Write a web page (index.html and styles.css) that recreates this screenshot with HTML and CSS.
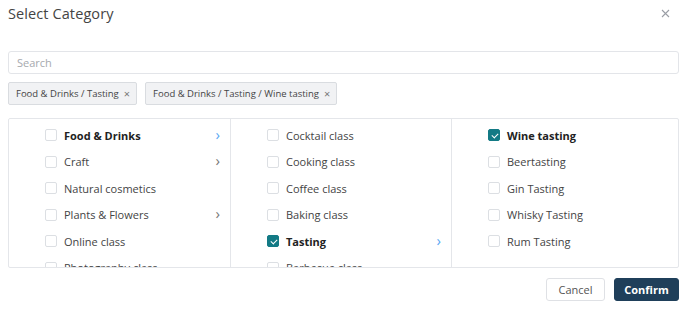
FILE: index.html
```html
<!DOCTYPE html>
<html lang="en">

<head>
    <meta charset="UTF-8">
    <meta name="viewport" content="width=device-width, initial-scale=1.0">
    <title>Select Category</title>
    <link rel="stylesheet" href="styles.css">
</head>

<body>
    <div class="modal">
        <div class="modal-header">
            <h2>Select Category</h2>
            <button class="close-btn" aria-label="Close">
                <svg width="9" height="9" viewBox="0 0 9 9"><path d="M1 1L8 8M8 1L1 8" stroke="#9a9ea5" stroke-width="1.1" fill="none"/></svg>
            </button>
        </div>

        <input type="text" class="search" placeholder="Search">

        <div class="tags">
            <span class="tag">Food &amp; Drinks / Tasting <span class="tag-x">&times;</span></span>
            <span class="tag">Food &amp; Drinks / Tasting / Wine tasting <span class="tag-x">&times;</span></span>
        </div>

        <div class="panel">
            <ul class="column">
                <li class="item active"><span class="box"></span><span class="label">Food &amp; Drinks</span><span class="chev blue">&rsaquo;</span></li>
                <li class="item"><span class="box"></span><span class="label">Craft</span><span class="chev">&rsaquo;</span></li>
                <li class="item"><span class="box"></span><span class="label">Natural cosmetics</span></li>
                <li class="item"><span class="box"></span><span class="label">Plants &amp; Flowers</span><span class="chev">&rsaquo;</span></li>
                <li class="item"><span class="box"></span><span class="label">Online class</span></li>
                <li class="item"><span class="box"></span><span class="label">Photography class</span></li>
            </ul>
            <ul class="column">
                <li class="item"><span class="box"></span><span class="label">Cocktail class</span></li>
                <li class="item"><span class="box"></span><span class="label">Cooking class</span></li>
                <li class="item"><span class="box"></span><span class="label">Coffee class</span></li>
                <li class="item"><span class="box"></span><span class="label">Baking class</span></li>
                <li class="item active"><span class="box checked"></span><span class="label">Tasting</span><span class="chev blue">&rsaquo;</span></li>
                <li class="item"><span class="box"></span><span class="label">Barbecue class</span></li>
            </ul>
            <ul class="column">
                <li class="item active"><span class="box checked"></span><span class="label">Wine tasting</span></li>
                <li class="item"><span class="box"></span><span class="label">Beertasting</span></li>
                <li class="item"><span class="box"></span><span class="label">Gin Tasting</span></li>
                <li class="item"><span class="box"></span><span class="label">Whisky Tasting</span></li>
                <li class="item"><span class="box"></span><span class="label">Rum Tasting</span></li>
            </ul>
        </div>

        <div class="modal-footer">
            <button class="btn btn-cancel">Cancel</button>
            <button class="btn btn-confirm">Confirm</button>
        </div>
    </div>
</body>

</html>
```

FILE: styles.css
```css
body {
    margin: 0;
    font-family: "Open Sans", "Noto Sans", sans-serif;
    color: #333;
    background: #fff;
}

.modal {
    padding: 0 9px 0 8px;
}

.modal-header {
    display: flex;
    justify-content: space-between;
    align-items: center;
    height: 26px;
    margin-bottom: 25px;
}

.modal-header h2 {
    margin: 0;
    font-size: 14.5px;
    font-weight: 400;
    color: #444;
    letter-spacing: 0.1px;
}

.close-btn {
    background: none;
    border: none;
    padding: 0;
    margin-right: 9px;
    display: flex;
    cursor: pointer;
}

.search {
    display: block;
    box-sizing: border-box;
    width: 100%;
    height: 23px;
    padding: 0 8px;
    border: 1px solid #e3e5e9;
    border-radius: 3px;
    font-family: inherit;
    font-size: 11px;
    color: #333;
    outline: none;
}

.search::placeholder {
    color: #a6a9ae;
}

.tags {
    display: flex;
    gap: 8px;
    margin-top: 8px;
}

.tag {
    display: inline-flex;
    align-items: center;
    box-sizing: border-box;
    height: 23px;
    padding: 0 6px 0 7px;
    background: #f1f2f4;
    border: 1px solid #d9dce0;
    border-radius: 2px;
    font-size: 9.5px;
    color: #444;
}

.tag-x {
    margin-left: 5px;
    font-size: 11px;
    color: #777;
}

.panel {
    display: grid;
    grid-template-columns: 221px 221px 1fr;
    height: 150px;
    margin-top: 13px;
    border: 1px solid #e4e6ea;
    border-radius: 2px;
    box-sizing: border-box;
    overflow: hidden;
}

.column {
    list-style: none;
    margin: 0;
    padding: 3px 10px 0 36px;
    overflow: hidden;
}

.column + .column {
    border-left: 1px solid #e4e6ea;
}

.item {
    display: flex;
    align-items: center;
    height: 26.5px;
    font-size: 11px;
    color: #444;
}

.item.active .label {
    font-weight: 700;
    color: #222;
}

.box {
    box-sizing: border-box;
    width: 12px;
    height: 12px;
    border: 1px solid #dcdfe3;
    border-radius: 2px;
    margin-right: 7px;
    flex-shrink: 0;
    position: relative;
}

.box.checked {
    background: #137a85;
    border-color: #137a85;
}

.box.checked::after {
    content: "";
    position: absolute;
    left: 3.5px;
    top: 1.5px;
    width: 3px;
    height: 5px;
    border: solid #fff;
    border-width: 0 1.2px 1.2px 0;
    transform: rotate(45deg);
}

.label {
    flex: 1;
    white-space: nowrap;
}

.chev {
    font-size: 15px;
    color: #777;
    line-height: 1;
    margin-top: -2px;
}

.chev.blue {
    color: #5aa7f2;
}

.modal-footer {
    display: flex;
    justify-content: flex-end;
    gap: 9px;
    margin-top: 10px;
}

.btn {
    height: 23px;
    border-radius: 3px;
    font-family: inherit;
    font-size: 11px;
    cursor: pointer;
}

.btn-cancel {
    width: 59px;
    background: #fff;
    border: 1px solid #dfe1e5;
    color: #555;
}

.btn-confirm {
    width: 65px;
    background: #1f3f5a;
    border: 1px solid #1f3f5a;
    color: #fff;
    font-weight: 700;
}
```
